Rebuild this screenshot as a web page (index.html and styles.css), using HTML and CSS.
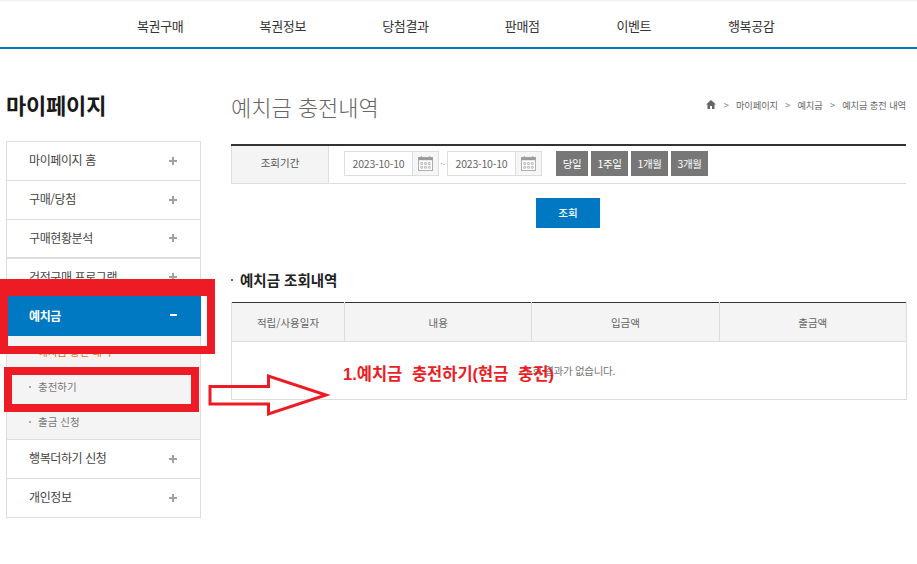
FILE: index.html
```html
<!DOCTYPE html>
<html lang="ko">
<head>
<meta charset="utf-8">
<title>예치금 충전내역</title>
<link rel="stylesheet" href="styles.css">
</head>
<body>
<svg class="sprite" width="0" height="0" aria-hidden="true">
  <symbol id="cal" viewBox="0 0 16 16">
    <path d="M3.5 0v2M12.5 0v2" stroke="#999" stroke-width="1" fill="none"/>
    <rect x="0.5" y="1.5" width="15" height="14" fill="#fff" stroke="#aaa"/>
    <rect x="0.5" y="1.5" width="15" height="3" fill="#999"/>
    <path d="M3 7h2v2H3zM7 7h2v2H7zM11 7h2v2h-2zM3 11h2v2H3zM7 11h2v2H7zM11 11h2v2h-2z" fill="none" stroke="#aaa" stroke-width="0.8"/>
  </symbol>
</svg>
<header class="top">
  <nav class="gnb">
    <a>복권구매</a><a>복권정보</a><a>당첨결과</a><a>판매점</a><a>이벤트</a><a>행복공감</a>
  </nav>
</header>
<div class="page">
  <aside class="side">
    <h2 class="side-title">마이페이지</h2>
    <ul class="menu">
      <li class="menu-item"><span>마이페이지 홈</span><i class="sign"></i></li>
      <li class="menu-item"><span>구매/당첨</span><i class="sign"></i></li>
      <li class="menu-item thick"><span>구매현황분석</span><i class="sign"></i></li>
      <li class="menu-item short"><span>건전구매 프로그램</span><i class="sign"></i></li>
      <li class="menu-item active"><span>예치금</span><i class="minus"></i></li>
      <li class="submenu">
        <a class="sub on">예치금 충전 내역</a>
        <a class="sub">충전하기</a>
        <a class="sub">출금 신청</a>
      </li>
      <li class="menu-item"><span>행복더하기 신청</span><i class="sign"></i></li>
      <li class="menu-item"><span>개인정보</span><i class="sign"></i></li>
    </ul>
  </aside>
  <main class="main">
    <div class="head">
      <h1 class="title">예치금 충전내역</h1>
      <div class="crumb">
        <svg class="home" viewBox="0 0 10 9" width="10" height="9"><path d="M5 0 0 4.500h1.500V9h2.500V6h2v3h2.500V4.500H10z" fill="#666"/></svg>
        <b>&gt;</b><span>마이페이지</span><b>&gt;</b><span>예치금</span><b>&gt;</b><span>예치금 충전 내역</span>
      </div>
    </div>
    <div class="search">
      <div class="search-label">조회기간</div>
      <div class="search-body">
        <div class="date"><span class="date-val">2023-10-10</span><span class="date-ic"><svg width="15" height="15"><use href="#cal"/></svg></span></div>
        <span class="tilde">~</span>
        <div class="date"><span class="date-val">2023-10-10</span><span class="date-ic"><svg width="15" height="15"><use href="#cal"/></svg></span></div>
        <div class="quick"><a>당일</a><a>1주일</a><a>1개월</a><a>3개월</a></div>
      </div>
    </div>
    <div class="action"><a class="btn">조회</a></div>
    <h3 class="sec-title">예치금 조회내역</h3>
    <table class="list">
      <colgroup><col class="c1"><col class="c2"><col class="c3"><col class="c4"></colgroup>
      <thead><tr><th>적립/사용일자</th><th>내용</th><th>입금액</th><th>출금액</th></tr></thead>
      <tbody><tr><td colspan="4">조회 결과가 없습니다.</td></tr></tbody>
    </table>
  </main>
</div>
<div class="mark mark-a"></div>
<div class="mark mark-b"></div>
<svg class="arrow" width="124" height="45" viewBox="0 0 124 45"><path d="M2 13.500H60.500V3L118 22 60.500 41V31H2z" fill="none" stroke="#ed1c24" stroke-width="3"/></svg>
<div class="note">1.예치금 충전하기(현금 충전)</div>
</body>
</html>
```
FILE: styles.css
```css
* { box-sizing: border-box; }
html, body { margin: 0; padding: 0; }
body {
  width: 917px;
  height: 564px;
  overflow: hidden;
  position: relative;
  background: #fff;
  color: #333;
  font-family: "Noto Sans CJK KR", "Liberation Sans", sans-serif;
  font-size: 12px;
}
.sprite { position: absolute; }
ul { list-style: none; margin: 0; padding: 0; }
h1, h2, h3 { margin: 0; }

.top {
  height: 49px;
  border-top: 1px solid #eee;
  border-bottom: 2px solid #0079c2;
}
.gnb {
  display: flex;
  height: 46px;
  padding-left: 137px;
  align-items: center;
  font-size: 13px;
  line-height: 18px;
  color: #333;
}
.gnb a { display: block; width: 47px; margin-right: 75.600px; letter-spacing: -.35px; white-space: nowrap; margin-top: 3px; }
.gnb a:nth-child(4), .gnb a:nth-child(5) { width: 36px; }

.page { display: flex; padding-left: 6px; }
.side { width: 195px; flex: none; }
.side-title {
  margin-top: 39px;
  height: 53px;
  font-size: 22px;
  line-height: 32px;
  font-weight: 700;
  color: #1a1a1a;
  letter-spacing: -.2px;
}
.menu { border: 1px solid #ddd; }
.menu-item {
  display: flex;
  justify-content: space-between;
  align-items: center;
  height: 39px;
  padding: 0 23px 3px 22px;
  border-bottom: 1px solid #ddd;
  font-size: 12px;
  color: #444;
  letter-spacing: -.4px;
}
.menu-item.thick { border-bottom-width: 2px; }
.menu-item.short { height: 37px; border-bottom: 0; }
.menu-item:last-child { border-bottom: 0; height: 38px; }
.sign {
  display: block;
  width: 8px;
  height: 8px;
  margin-top: 2px;
  background:
    linear-gradient(#a0a0a0, #a0a0a0) center / 100% 2px no-repeat,
    linear-gradient(#a0a0a0, #a0a0a0) center / 2px 100% no-repeat;
}
.menu-item.active {
  height: 40px;
  margin: 0 -1px;
  padding: 0 24px 2px 23px;
  background: #0079c2;
  color: #fff;
  font-weight: 700;
  border: 0;
}
.minus { display: block; width: 7px; height: 2px; background: #fff; }
.submenu { background: #f4f4f4; border-bottom: 1px solid #ddd; height: 104px; }
.sub {
  display: block;
  position: relative;
  height: 35px;
  line-height: 31px;
  padding-left: 31px;
  font-size: 10.500px;
  color: #777;
}
.sub::before {
  content: "";
  position: absolute;
  left: 22px;
  top: 15px;
  width: 2px;
  height: 2px;
  background: #aaa;
}
.sub.on { color: #e8710a; }

.main { width: 675px; margin-left: 30px; flex: none; }
.head {
  display: flex;
  justify-content: space-between;
  align-items: center;
  height: 95px;
}
.title {
  font-size: 22px;
  font-weight: 300;
  color: #666;
  line-height: 32px;
  margin-top: 18px;
}
.crumb {
  display: flex;
  align-items: center;
  gap: 7px;
  font-size: 9.250px;
  color: #666;
  margin-top: 16px;
  letter-spacing: -.1px;
}
.crumb b { font-weight: 400; color: #888; font-size: 10px; }
.home { display: block; }

.search {
  display: flex;
  height: 40px;
  border-top: 2px solid #333;
  border-bottom: 1px solid #ddd;
}
.search-label {
  width: 98px;
  background: #f4f4f4;
  border: 1px solid #ddd;
  border-width: 0 1px 0 1px;
  text-align: center;
  line-height: 33px;
  font-size: 10.500px;
  color: #555;
}
.search-body { display: flex; align-items: flex-start; padding-left: 15px; padding-top: 5px; }
.date {
  display: flex;
  width: 95px;
  height: 25px;
  border: 1px solid #ddd;
}
.date-val {
  width: 68px;
  border-right: 1px solid #ddd;
  text-align: center;
  font-size: 10.500px;
  line-height: 24px;
  color: #666;
  letter-spacing: -.2px;
}
.date-ic { flex: 1; display: flex; align-items: center; justify-content: center; background: #f6f6f6; }
.date-ic svg { display: block; }
.tilde { width: 8px; line-height: 25px; text-align: center; font-size: 9px; color: #888; }
.quick { display: flex; gap: 3px; margin-left: 14px; }
.quick a {
  display: block;
  width: 37px;
  height: 25px;
  line-height: 25px;
  background: #777;
  color: #fff;
  font-size: 10.500px;
  text-align: center;
  letter-spacing: -.4px;
}
.quick a:first-child { width: 32px; }
.action { display: flex; justify-content: center; padding: 14px 1px 0 0; }
.btn {
  display: block;
  width: 64px;
  height: 30px;
  background: #0079c2;
  color: #fff;
  font-size: 10.500px;
  font-weight: 500;
  line-height: 29px;
  text-align: center;
}
.sec-title {
  position: relative;
  margin-top: 41px;
  height: 33px;
  padding-left: 9px;
  font-size: 14.500px;
  line-height: 22px;
  font-weight: 700;
  color: #222;
}
.sec-title::before {
  content: "";
  position: absolute;
  left: 0;
  top: 10px;
  width: 2px;
  height: 2px;
  background: #666;
}
.list {
  width: 675px;
  border-collapse: collapse;
  table-layout: fixed;
  border-top: 1px solid #333;
}
.c1 { width: 113px; }
.c2, .c3, .c4 { width: 187.300px; }
.list th {
  height: 39px;
  background: #f4f4f4;
  border: 1px solid #ddd;
  border-top: 0;
  font-size: 10.500px;
  font-weight: 400;
  color: #666;
}
.list td {
  height: 58px;
  padding-bottom: 2px;
  border: 1px solid #ddd;
  text-align: center;
  font-size: 10.500px;
  letter-spacing: -.3px;
  color: #777;
}

.mark { position: absolute; border: 8px solid #ed1c24; }
.mark-a { left: 0; top: 279px; width: 215px; height: 75px; border-top-width: 17px; }
.mark-b { left: 4px; top: 367px; width: 195px; height: 45px; }
.arrow { position: absolute; left: 208px; top: 373px; }
.note {
  position: absolute;
  left: 343px;
  top: 362px;
  font-family: "Liberation Sans", "Noto Sans CJK KR", sans-serif;
  font-size: 16.500px;
  line-height: 24px;
  font-weight: 700;
  color: #ed1c24;
  white-space: nowrap;
  word-spacing: 5px;
}
```
